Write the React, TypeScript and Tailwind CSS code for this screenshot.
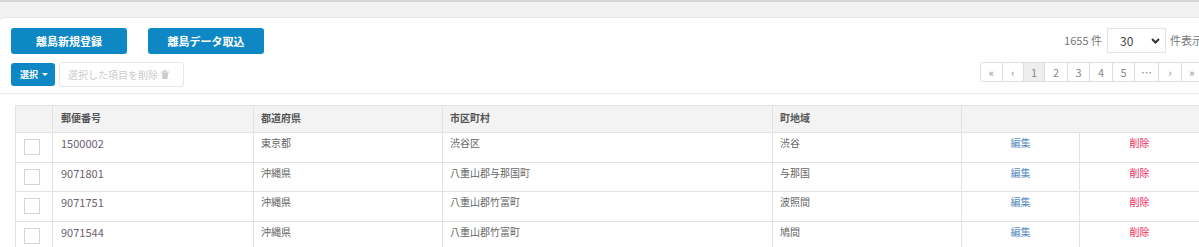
const rows = [
  { zip: "1500002", pref: "東京都", city: "渋谷区", town: "渋谷" },
  { zip: "9071801", pref: "沖縄県", city: "八重山郡与那国町", town: "与那国" },
  { zip: "9071751", pref: "沖縄県", city: "八重山郡竹富町", town: "波照間" },
  { zip: "9071544", pref: "沖縄県", city: "八重山郡竹富町", town: "鳩間" },
];

const pages = [
  { label: "«", w: "w-[21px]" },
  { label: "‹", w: "w-[21px]" },
  { label: "1", w: "w-[21px]", active: true },
  { label: "2", w: "w-[23px]" },
  { label: "3", w: "w-[22px]" },
  { label: "4", w: "w-[23px]" },
  { label: "5", w: "w-[22px]" },
  { label: "…", w: "w-[24px]" },
  { label: "›", w: "w-[23px]" },
  { label: "»", w: "w-[21px]" },
];

function TrashIcon() {
  return (
    <svg width="8" height="9" viewBox="0 0 8 9" className="inline-block ml-[3px]">
      <rect x="0" y="1.5" width="8" height="1.2" fill="#cccccc" />
      <rect x="2.5" y="0" width="3" height="1.5" fill="#cccccc" />
      <path d="M1 3h6l-0.5 6h-5z" fill="#cccccc" />
    </svg>
  );
}

const cell = "border border-[#e2e2e2] align-top pt-[3px] leading-[14px]";

export default function App() {
  return (
    <div
      className="w-[1199px] h-[247px] overflow-hidden bg-[#f2f2f2]"
      style={{ fontFamily: '"Noto Sans CJK JP", "Noto Sans", sans-serif' }}
    >
      <div className="h-[2px] bg-[#d6d6d6]" />
      <div className="w-[1214px] mt-[15px] bg-white rounded-tl-[5px] border-t border-[#e6e6e6]">
        {/* toolbar */}
        <div className="flex justify-between px-[11px] pt-[10px] pb-[6px] border-b border-[#e8e8e8]">
          <div>
            <div className="flex gap-[21px]">
              <button className="w-[116px] h-[26px] rounded-[3px] bg-[#0d88c5] text-white text-[11px] font-bold">
                離島新規登録
              </button>
              <button className="w-[116px] h-[26px] rounded-[3px] bg-[#0d88c5] text-white text-[11px] font-bold">
                離島データ取込
              </button>
            </div>
            <div className="flex items-center gap-[4px] mt-[8px]">
              <button className="flex items-center w-[44px] h-[23px] rounded-[3px] bg-[#0d88c5] text-white text-[9px] font-bold pl-[9px]">
                選択
                <span className="ml-[4px] w-0 h-0 border-l-[3px] border-r-[3px] border-t-[3px] border-l-transparent border-r-transparent border-t-white" />
              </button>
              <button className="flex items-center w-[125px] h-[25px] rounded-[3px] border border-[#e6e6e6] text-[#cccccc] text-[10px] pl-[8px]">
                選択した項目を削除
                <TrashIcon />
              </button>
            </div>
          </div>
          <div className="flex flex-col items-end">
            <div className="flex items-center h-[25px] text-[11px] text-[#777]">
              <span className="mr-[5px]">1655 件</span>
              <div className="flex items-center justify-between w-[59px] h-[25px] border border-[#e3e3e3] pl-[12px] pr-[5px] text-[12px] text-[#444]">
                <span>30</span>
                <svg width="9" height="6" viewBox="0 0 9 6">
                  <path d="M1 1l3.5 3.5L8 1" stroke="#333" strokeWidth="2" fill="none" />
                </svg>
              </div>
              <span className="ml-[4px]">件表示</span>
            </div>
            <div className="flex mt-[9px] h-[20px] border border-[#dddddd] rounded-[3px] overflow-hidden text-[11px] text-[#888]">
              {pages.map((p, i) => (
                <div
                  key={i}
                  className={`${p.w} flex items-center justify-center ${i > 0 ? "border-l border-[#dddddd]" : ""} ${p.active ? "bg-[#eeeeee]" : ""}`}
                >
                  {p.label}
                </div>
              ))}
            </div>
          </div>
        </div>

        {/* table */}
        <table className="ml-[15px] mt-[11px] w-[1184px] border-collapse table-fixed text-[10px]">
          <colgroup>
            <col className="w-[37px]" />
            <col className="w-[201px]" />
            <col className="w-[189px]" />
            <col className="w-[330px]" />
            <col className="w-[189px]" />
            <col className="w-[118px]" />
            <col className="w-[120px]" />
          </colgroup>
          <thead>
            <tr className="h-[27px] bg-[#f3f3f3] text-[#555] font-bold text-left">
              <th className="border border-[#e2e2e2]" />
              <th className="border border-[#e2e2e2] px-[8px] pb-[3px]">郵便番号</th>
              <th className="border border-[#e2e2e2] px-[7px] pb-[3px]">都道府県</th>
              <th className="border border-[#e2e2e2] px-[7px] pb-[3px]">市区町村</th>
              <th className="border border-[#e2e2e2] px-[7px] pb-[3px]">町地域</th>
              <th className="border border-[#e2e2e2]" colSpan={2} />
            </tr>
          </thead>
          <tbody>
            {rows.map((r, i) => (
              <tr key={i} className="h-[29.5px] text-[#666]">
                <td className="border border-[#e2e2e2] px-[8px] align-middle">
                  <div className="w-[16px] h-[16px] border border-[#d4d4d4] bg-white" />
                </td>
                <td className={`${cell} px-[8px] text-[#6d5f74] text-[11px]`}>{r.zip}</td>
                <td className={`${cell} px-[7px]`}>{r.pref}</td>
                <td className={`${cell} px-[7px]`}>{r.city}</td>
                <td className={`${cell} px-[7px]`}>{r.town}</td>
                <td className={`${cell} text-center text-[#5b8fc4]`}>編集</td>
                <td className={`${cell} text-center text-[#f0285a]`}>削除</td>
              </tr>
            ))}
          </tbody>
        </table>
      </div>
    </div>
  );
}
